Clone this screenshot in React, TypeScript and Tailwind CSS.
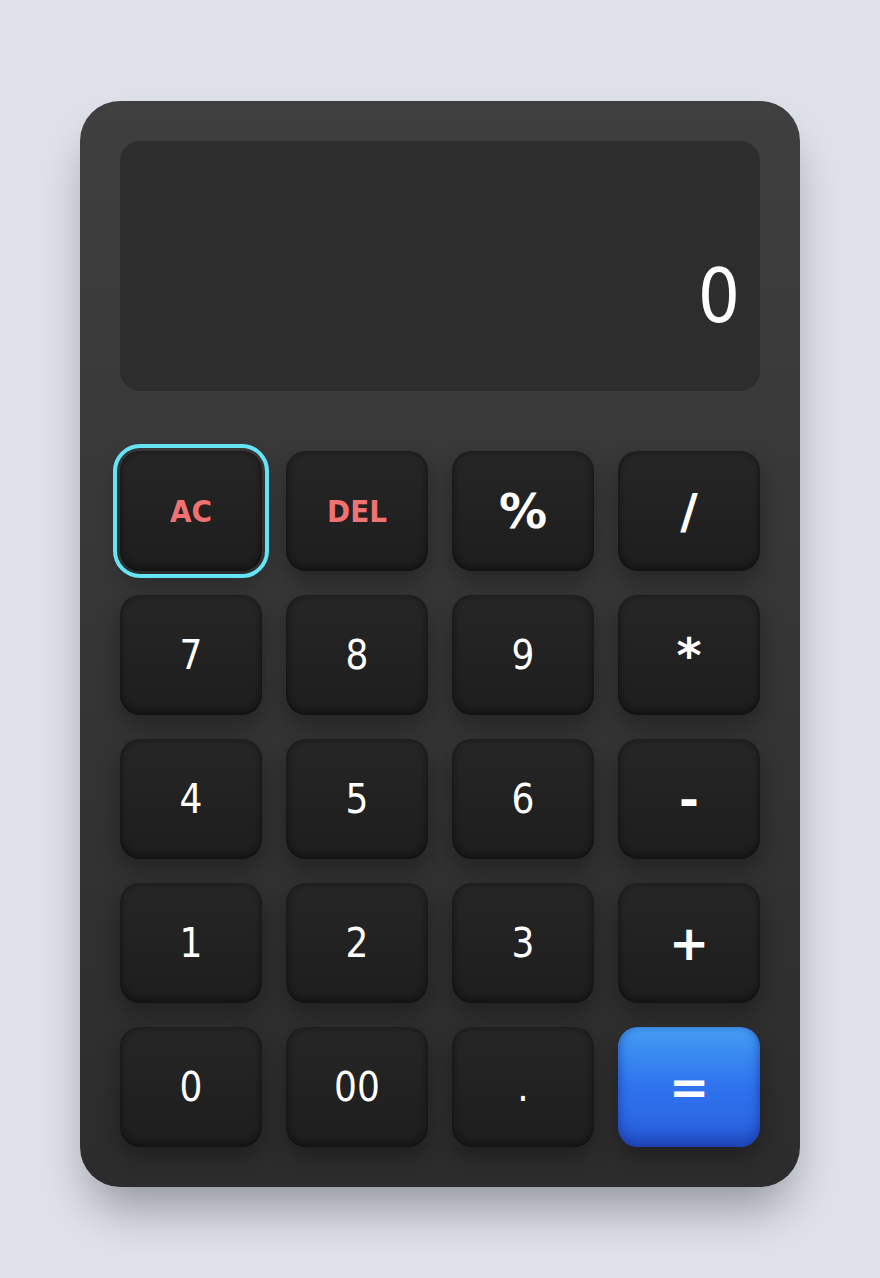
import React, { useState } from 'react';

type Key = {
  label: string;
  kind: 'digit' | 'op' | 'clear' | 'equals';
};

const keys: Key[] = [
  { label: 'AC', kind: 'clear' },
  { label: 'DEL', kind: 'clear' },
  { label: '%', kind: 'op' },
  { label: '/', kind: 'op' },
  { label: '7', kind: 'digit' },
  { label: '8', kind: 'digit' },
  { label: '9', kind: 'digit' },
  { label: '*', kind: 'op' },
  { label: '4', kind: 'digit' },
  { label: '5', kind: 'digit' },
  { label: '6', kind: 'digit' },
  { label: '-', kind: 'op' },
  { label: '1', kind: 'digit' },
  { label: '2', kind: 'digit' },
  { label: '3', kind: 'digit' },
  { label: '+', kind: 'op' },
  { label: '0', kind: 'digit' },
  { label: '00', kind: 'digit' },
  { label: '.', kind: 'digit' },
  { label: '=', kind: 'equals' },
];

const darkKey =
  'bg-gradient-to-b from-[#262626] to-[#1d1d1d] shadow-[0_10px_22px_rgba(0,0,0,0.3),inset_0_0_6px_rgba(0,0,0,0.4),inset_0_-3px_6px_rgba(0,0,0,0.25)]';

const blueKey =
  'bg-gradient-to-b from-[#459df2] via-[#2f73ef] to-[#2a5fdc] shadow-[0_10px_22px_rgba(0,0,0,0.3),inset_0_-10px_14px_rgba(20,40,140,0.45),inset_0_0_6px_rgba(20,40,120,0.35)]';

const textFor: Record<Key['kind'], string> = {
  digit: 'text-[40px] font-normal text-white',
  op: 'text-[48px] font-bold text-white font-["DejaVu_Sans",sans-serif]',
  clear: 'text-[31px] font-bold text-[#f07272]',
  equals: 'text-[48px] font-bold text-white font-["DejaVu_Sans",sans-serif]',
};

export default function App() {
  const [display] = useState('0');

  return (
    <div
      className="min-h-screen bg-[#dfe2eb] flex justify-center pt-[101px]"
      style={{ fontFamily: '"DejaVu Sans Condensed", "DejaVu Sans", Verdana, sans-serif' }}
    >
      <div className="w-[720px] h-[1086px] rounded-[40px] bg-gradient-to-b from-[#3f3f3f] to-[#2c2c2c] p-10 shadow-[0_30px_50px_-10px_rgba(0,0,0,0.35)]">
        {/* Display */}
        <div className="h-[250px] rounded-[20px] bg-[#2d2d2d] flex items-end justify-end px-5 pb-[58px] mb-[60px]">
          <span className="text-[74px] leading-none text-white">{display}</span>
        </div>

        {/* Keypad */}
        <div className="grid grid-cols-4 gap-6">
          {keys.map((k) => (
            <button
              key={k.label}
              className={`h-[120px] rounded-[20px] flex items-center justify-center ${
                k.kind === 'equals' ? blueKey : darkKey
              } ${k.label === 'AC' ? 'outline-4 outline-[#66e4f6] outline-offset-[3px]' : ''}`}
            >
              <span className={`leading-none ${textFor[k.kind]}`}>{k.label}</span>
            </button>
          ))}
        </div>
      </div>
    </div>
  );
}
